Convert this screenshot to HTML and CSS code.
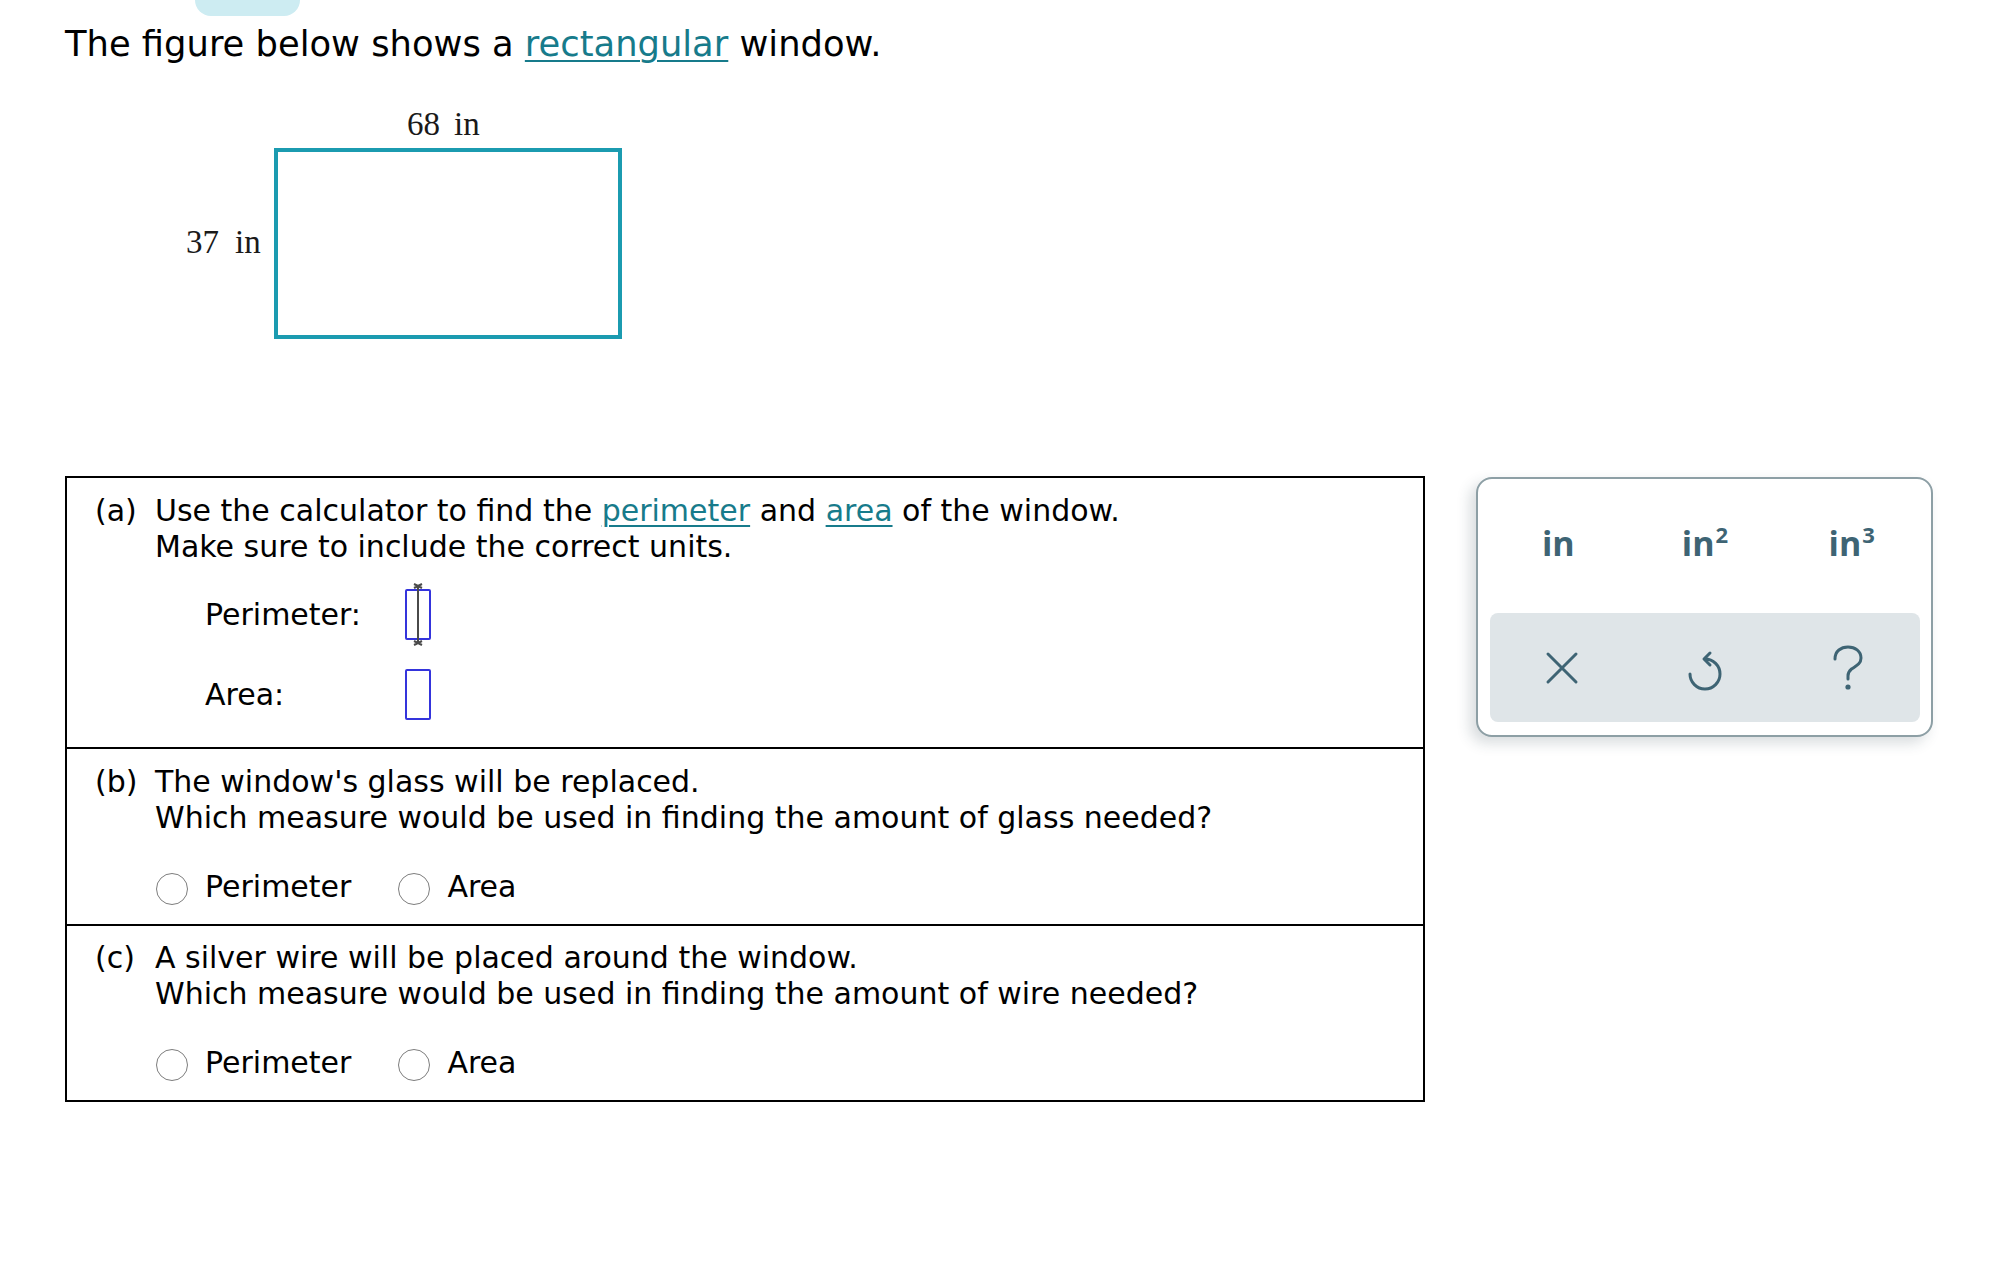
FILE: index.html
```html
<!DOCTYPE html>
<html lang="en">
<head>
<meta charset="utf-8">
<title>Rectangular window</title>
<link rel="stylesheet" href="styles.css">
</head>
<body>
<div class="page">
  <div class="tab-pill"></div>
  <p class="statement">The figure below shows a <a class="term">rectangular</a> window.</p>

  <svg class="figure" width="600" height="265" viewBox="0 0 600 265">
    <text class="fig-label" x="342" y="55">68</text>
    <text class="fig-label" x="389" y="55">in</text>
    <text class="fig-label" x="121" y="173">37</text>
    <text class="fig-label" x="170" y="173">in</text>
    <rect class="fig-rect" x="211" y="70" width="344" height="187"></rect>
  </svg>

  <div class="work">
    <div class="questions">
      <section class="part part-a">
        <span class="part-tag">(a)</span>
        <div class="part-body">
          <div>Use the calculator to find the <a class="term">perimeter</a> and <a class="term">area</a> of the window.</div>
          <div>Make sure to include the correct units.</div>
          <div class="answer-rows">
            <div class="answer-row">
              <span class="answer-label">Perimeter:</span>
              <span class="answer-box">
                <svg class="caret" width="14" height="63" viewBox="0 0 14 63">
                  <path d="M7 3 V60 M3 1 L11 5 M11 1 L3 5 M3 58 L11 62 M11 58 L3 62" />
                </svg>
              </span>
            </div>
            <div class="answer-row">
              <span class="answer-label">Area:</span>
              <span class="answer-box"></span>
            </div>
          </div>
        </div>
      </section>

      <section class="part part-b">
        <span class="part-tag">(b)</span>
        <div class="part-body">
          <div>The window's glass will be replaced.</div>
          <div>Which measure would be used in finding the amount of glass needed?</div>
          <div class="choices">
            <label class="choice"><span class="radio"></span>Perimeter</label>
            <label class="choice"><span class="radio"></span>Area</label>
          </div>
        </div>
      </section>

      <section class="part part-c">
        <span class="part-tag">(c)</span>
        <div class="part-body">
          <div>A silver wire will be placed around the window.</div>
          <div>Which measure would be used in finding the amount of wire needed?</div>
          <div class="choices">
            <label class="choice"><span class="radio"></span>Perimeter</label>
            <label class="choice"><span class="radio"></span>Area</label>
          </div>
        </div>
      </section>
    </div>

    <aside class="keypad">
      <div class="unit-row">
        <span class="unit">in</span>
        <span class="unit">in<sup>2</sup></span>
        <span class="unit">in<sup>3</sup></span>
      </div>
      <div class="action-row">
        <span class="action">
          <svg width="34" height="34" viewBox="0 0 34 34"><path d="M3 3 L31 31 M31 3 L3 31"/></svg>
        </span>
        <span class="action">
          <svg class="undo" width="40" height="44" viewBox="0 0 40 44"><path d="M20 11 A15 15 0 1 1 5 26 M25 5 L19 11 L25 17"/></svg>
        </span>
        <span class="action">
          <svg width="32" height="48" viewBox="0 0 32 48"><path d="M3 15 C3 7 9 3 16 3 C23 3 29 7 29 14 C29 20 24 22 19.5 25 C17 27 16 28.5 16 32 L16 35"/><circle cx="16" cy="43" r="2.6" class="dot"/></svg>
        </span>
      </div>
    </aside>
  </div>
</div>
</body>
</html>
```

FILE: styles.css
```css
* { box-sizing: border-box; }
html, body { margin: 0; background: #ffffff; }
body {
  font-family: "DejaVu Sans", Verdana, sans-serif;
  color: #000000;
}
.page { padding-left: 65px; }

.tab-pill {
  margin-left: 130px;
  width: 105px;
  height: 16px;
  background: #cdecf2;
  border-radius: 0 0 20px 20px;
}

.statement {
  margin: 8px 0 0;
  font-size: 35.3px;
  line-height: 40px;
}

.term {
  color: #177b8b;
  text-decoration: underline;
  text-decoration-thickness: 2px;
  text-underline-offset: 4px;
}

.figure { display: block; margin-top: 16px; }
.fig-label {
  font-family: "Liberation Serif", "Times New Roman", serif;
  font-size: 33px;
  fill: #1a1a1a;
}
.fig-rect { fill: none; stroke: #1b9bb0; stroke-width: 4; }

.work {
  display: flex;
  align-items: flex-start;
  gap: 51px;
  margin-top: 131px;
}

.questions {
  width: 1360px;
  border: 2px solid #000000;
  flex: none;
}

.part {
  display: flex;
  padding: 15px 0 19px 28px;
  font-size: 30px;
  line-height: 36px;
}
.part + .part { border-top: 2px solid #000000; }
.part-a { padding-top: 15px; padding-bottom: 27px; }
.part-c { padding-top: 14px; }

.part-tag { width: 60px; flex: none; }
.part-body { flex: 1; }

.answer-rows {
  display: flex;
  flex-direction: column;
  gap: 29px;
  margin-top: 24px;
  padding-left: 50px;
}
.answer-row { display: flex; align-items: center; height: 51px; }
.answer-label { width: 200px; }
.answer-box {
  position: relative;
  width: 26px;
  height: 51px;
  border: 2px solid #3434dc;
  border-radius: 2px;
}
.caret {
  position: absolute;
  left: 4px;
  top: -8px;
}
.caret path { stroke: #4a4a4a; stroke-width: 2; fill: none; }

.choices { display: flex; margin-top: 33px; padding-left: 1px; }
.choice { display: flex; align-items: flex-start; margin-right: 47px; }
.radio {
  width: 32px;
  height: 32px;
  border: 1px solid #7d7d7d;
  border-radius: 50%;
  margin-top: 4px;
  margin-right: 17px;
  background: #ffffff;
}

.keypad {
  width: 457px;
  height: 260px;
  margin-top: 1px;
  flex: none;
  display: flex;
  flex-direction: column;
  padding: 0 11px 13px 12px;
  border: 2px solid #8d9fa5;
  border-radius: 16px;
  background: #ffffff;
  box-shadow: -6px 6px 14px rgba(40, 60, 70, 0.18);
}

.unit-row {
  height: 134px;
  margin: 0 -5px;
  display: grid;
  grid-template-columns: repeat(3, 1fr);
  align-items: center;
  justify-items: center;
  padding-bottom: 7px;
  font-family: "Open Sans", "DejaVu Sans", sans-serif;
  font-weight: 700;
  font-size: 34px;
  line-height: 40px;
  color: #3e6474;
}
.unit sup {
  font-size: 22px;
  line-height: 0;
  vertical-align: 13px;
  margin-left: 1px;
}

.action-row {
  height: 109px;
  display: grid;
  grid-template-columns: repeat(3, 1fr);
  align-items: center;
  justify-items: center;
  background: #dfe5e8;
  border-radius: 8px;
}
.action svg { display: block; }
.action .undo { margin-top: 4px; }
.action path {
  fill: none;
  stroke: #3e6474;
  stroke-width: 3;
  stroke-linecap: round;
  stroke-linejoin: round;
}
.action .dot { fill: #3e6474; }
```
